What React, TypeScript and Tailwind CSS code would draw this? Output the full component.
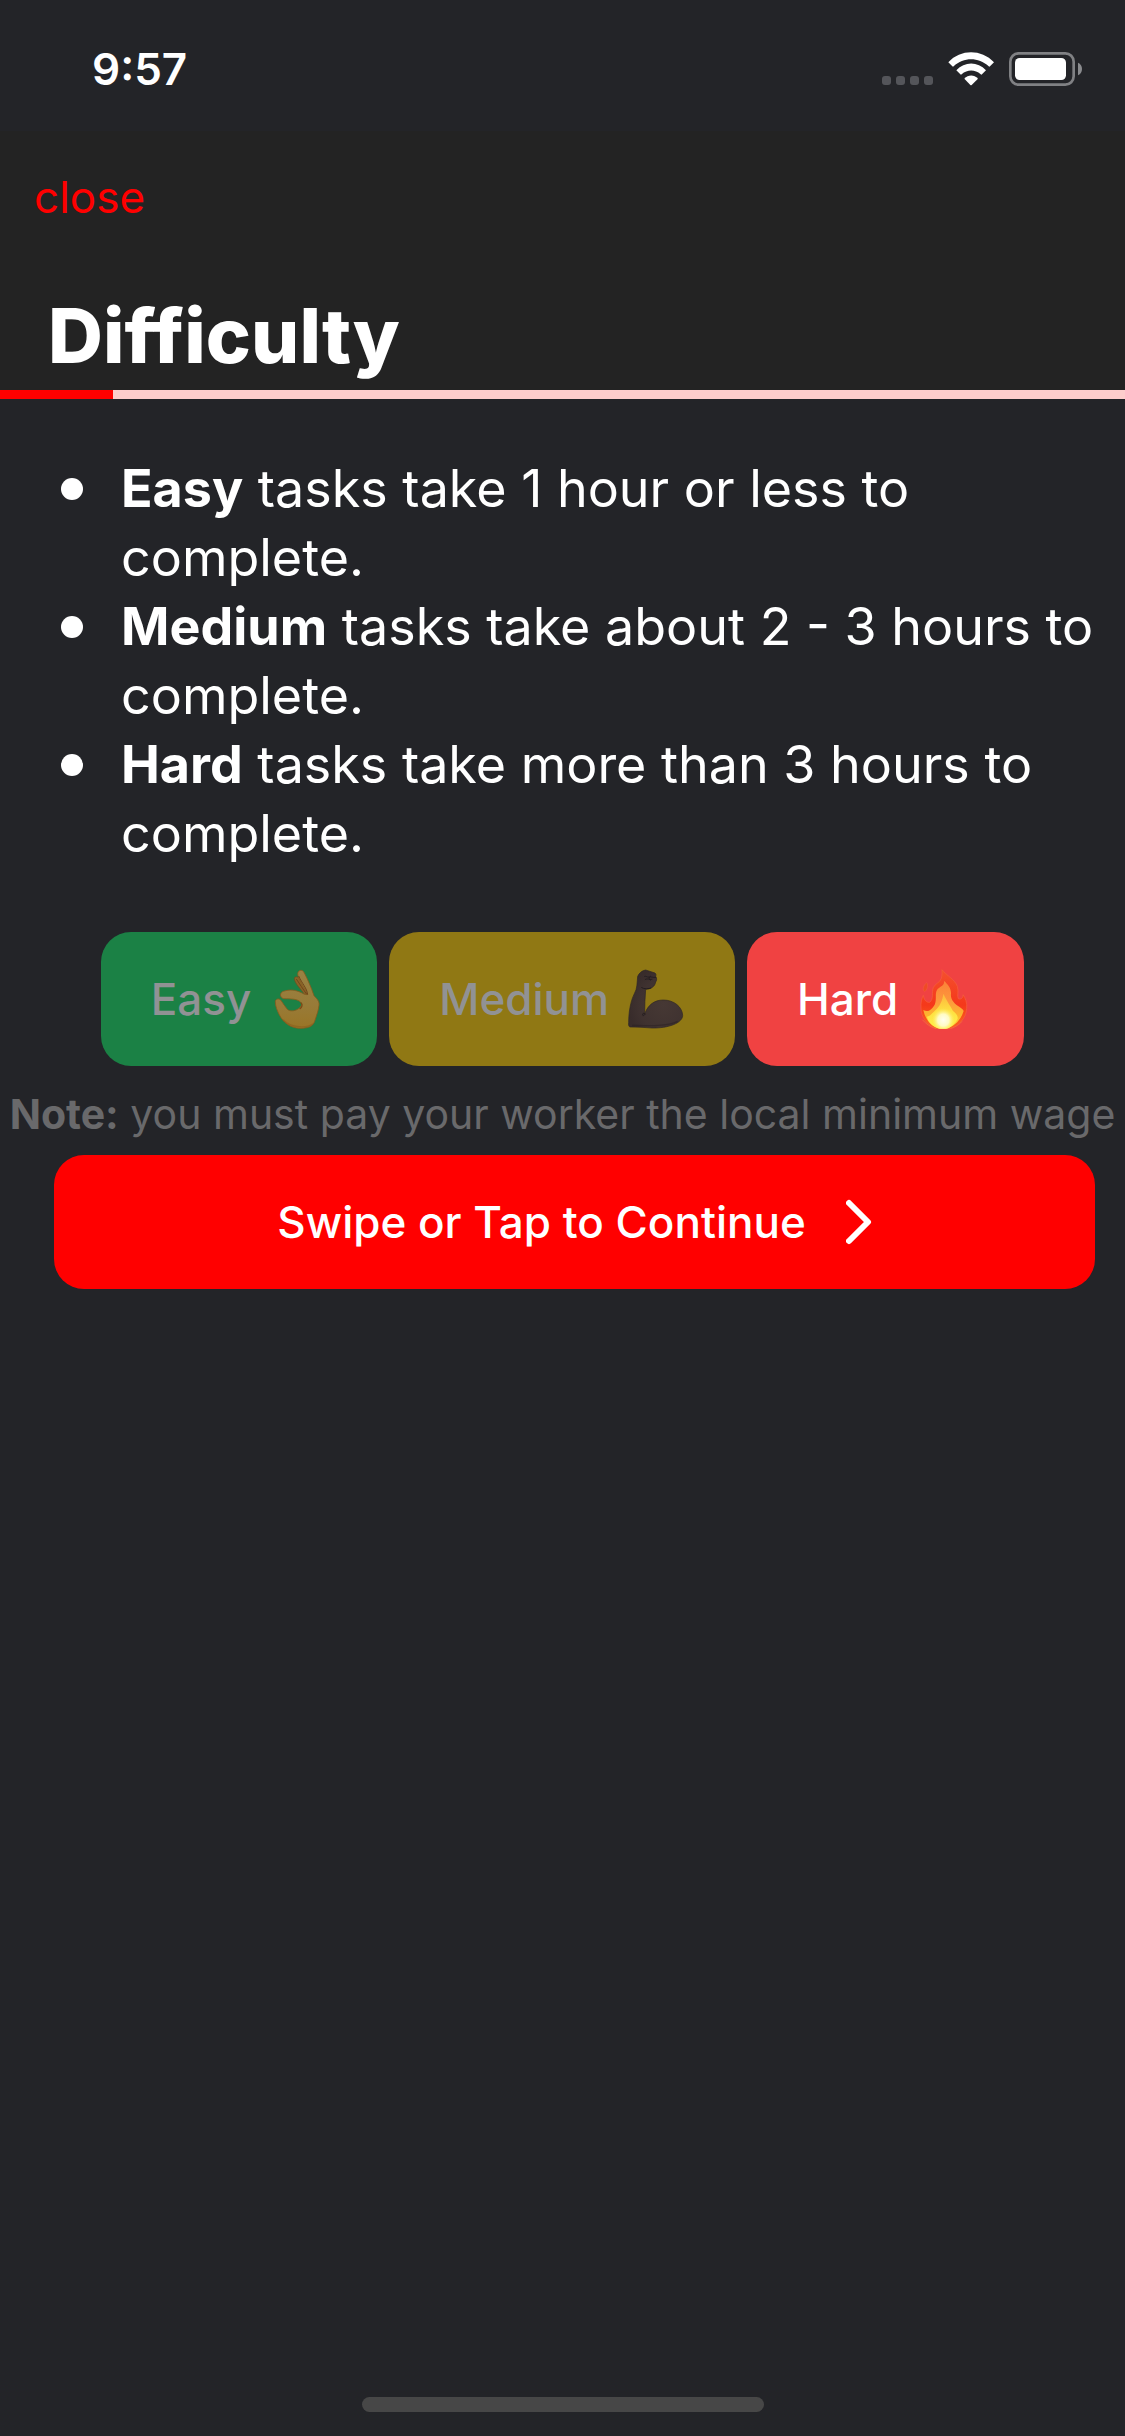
import { useState } from "react";
import type { ReactNode } from "react";

function SignalDots() {
  return (
    <div className="flex gap-[5px] pb-px">
      {[0, 1, 2, 3].map((n) => (
        <span key={n} className="size-[9px] rounded-[3px] bg-[#54555a]" />
      ))}
    </div>
  );
}

function WifiIcon() {
  return (
    <svg viewBox="264 65 138 102" className="h-[34px] w-[46px]" fill="#fff" aria-hidden="true">
      <path d="M265 96C302 56 364 56 402 96L390 108Q388 110 386 108C355 80 311 80 281 108Q279 110 277 108Z" />
      <path d="M289 120C314 93 353 93 378 120L366 132Q364 134 362 132C345 117 322 117 305 132Q303 134 301 132Z" />
      <path d="M313 145C325 132 342 132 354 145L335 164Q333 166 331 164Z" />
    </svg>
  );
}

function BatteryIcon() {
  return (
    <svg viewBox="447 66 219 102" className="h-[34px] w-[73px]" aria-hidden="true">
      <rect x="451" y="70" width="190" height="94" rx="25" fill="none" stroke="#808184" strokeWidth="8" />
      <rect x="465" y="84" width="153" height="66" rx="14" fill="#fff" />
      <path d="M654 98C670 104 670 130 654 136Z" fill="#8a8b8e" />
    </svg>
  );
}

function OkHand() {
  return (
    <svg viewBox="552 180 180 180" className="size-[60px]" aria-hidden="true">
      <defs>
        <linearGradient id="okSkin" x1="0" y1="0" x2="0" y2="1">
          <stop offset="0" stopColor="#9a8142" />
          <stop offset="0.6" stopColor="#987b38" />
          <stop offset="1" stopColor="#9a7526" />
        </linearGradient>
      </defs>
      <path d="M634 207C639 199 648 205 655 216C665 232 672 246 674 262L664 256C656 241 634 224 634 207Z" fill="#8a6428" stroke="#744a1c" strokeWidth="2" />
      <path
        fillRule="evenodd"
        d="M644 194C646 181 660 181 664 192C673 209 685 236 693 260C701 269 710 276 708 289C706 307 700 320 695 337C690 352 676 358 650 358C622 357 601 341 588 316C583 305 577 292 577 278C577 270 587 267 593 273C600 281 605 293 613 301C622 309 640 306 650 296C655 291 657 286 655 282C645 268 622 270 602 269C588 265 591 250 601 247C620 241 636 242 655 251C664 256 670 258 673 256C665 234 645 212 644 194Z"
        fill="url(#okSkin)"
        stroke="#875b1d"
        strokeWidth="2.5"
      />
      <path d="M647 201C657 224 672 237 674 257" fill="none" stroke="#70451b" strokeWidth="3" />
      <path d="M640 210C650 225 660 240 671 256" fill="none" stroke="#70451b" strokeWidth="3" />
      <path d="M654 282C660 287 657 294 651 299" fill="none" stroke="#7b4b18" strokeWidth="4" strokeLinecap="round" />
      <path d="M600 332C625 358 672 358 690 344" fill="none" stroke="#8c5e1e" strokeWidth="4" opacity="0.6" />
    </svg>
  );
}

function FlexedArm() {
  return (
    <svg viewBox="727 180 180 180" className="size-[60px]" aria-hidden="true">
      <defs>
        <radialGradient id="armSkin" cx="0.65" cy="0.6" r="0.65">
          <stop offset="0" stopColor="#463834" />
          <stop offset="0.7" stopColor="#3f3230" />
          <stop offset="1" stopColor="#382c2b" />
        </radialGradient>
      </defs>
      <path
        d="M765 202C769 193 778 184 789 183L817 192C821 195 820 199 819 202C823 207 823 214 819 219C817 232 806 240 789 241C787 265 786 290 786 315C796 287 815 273 842 273C874 273 899 294 900 319C900 342 857 358 808 357C785 355 765 354 742 354C738 353 737 347 738 341C738 310 743 278 755 254C764 240 763 220 765 202Z"
        fill="url(#armSkin)"
        stroke="#2e2526"
        strokeWidth="2"
      />
      <path d="M780 317C783 309 785 311 787 316C785 319 783 320 781 320M777 236C784 241 798 240 805 237" fill="none" stroke="#241d20" strokeWidth="3" strokeLinecap="round" />
      <path d="M786 202C792 200 793 206 799 204C806 202 810 207 819 205M788 211C796 207 798 213 808 211M803 202C798 206 798 210 804 214" fill="none" stroke="#211b1f" strokeWidth="2.5" strokeLinecap="round" />
      <path d="M748 349C790 350 850 354 885 337" fill="none" stroke="#2d2325" strokeWidth="4" opacity="0.6" />
    </svg>
  );
}

function Fire() {
  return (
    <svg viewBox="546 180 180 180" className="size-[60px]" aria-hidden="true">
      <defs>
        <linearGradient id="fireOuter" x1="0" y1="0" x2="0" y2="1">
          <stop offset="0" stopColor="#f4502e" />
          <stop offset="0.6" stopColor="#f5381a" />
          <stop offset="1" stopColor="#fb6a1c" />
        </linearGradient>
        <linearGradient id="fireMid" x1="0" y1="0" x2="0" y2="1">
          <stop offset="0" stopColor="#fb8038" />
          <stop offset="0.45" stopColor="#fd9a3c" />
          <stop offset="0.75" stopColor="#fdb82c" />
          <stop offset="1" stopColor="#fee046" />
        </linearGradient>
        <linearGradient id="fireInner" x1="0" y1="0" x2="0" y2="1">
          <stop offset="0" stopColor="#fdb43c" />
          <stop offset="0.5" stopColor="#fee042" />
          <stop offset="1" stopColor="#fff04a" />
        </linearGradient>
        <radialGradient id="fireCore" cx="0.5" cy="0.6" r="0.5">
          <stop offset="0" stopColor="#fffef0" />
          <stop offset="0.5" stopColor="#fffbc4" />
          <stop offset="1" stopColor="#fff060" stopOpacity="0" />
        </radialGradient>
      </defs>
      <path
        d="M630 182C643 199 669 212 676 232C681 249 674 260 679 269C687 273 694 266 693 257C700 266 706 282 704 298C702 328 681 352 650 359L614 359C586 350 567 325 567 297C566 281 569 268 574 259C576 273 583 281 593 280C606 270 598 252 604 236C609 223 624 222 628 208C631 199 630 191 630 182Z"
        fill="url(#fireOuter)"
        stroke="#f4613d"
        strokeWidth="2"
      />
      <path d="M584 221C590 229 585 244 578 248C570 243 574 229 584 221Z" fill="#ef4a25" stroke="#f36b49" strokeWidth="1" />
      <path
        d="M636 215C647 226 658 237 657 254C655 269 664 279 671 286C681 295 690 296 695 306C686 334 668 351 645 358H620C595 350 579 329 574 303C588 312 600 301 608 287C615 272 608 254 615 243C622 233 639 231 636 215Z"
        fill="url(#fireMid)"
      />
      <path
        d="M634 254C643 274 656 292 663 306C673 314 678 320 677 329C668 347 651 358 640 359H623C603 354 588 339 585 323C596 321 602 311 610 304C622 293 632 275 634 254Z"
        fill="url(#fireInner)"
      />
      <ellipse cx="634" cy="326" rx="34" ry="36" fill="url(#fireCore)" />
      <path d="M571 332C583 346 596 354 612 359M690 337C683 347 670 354 655 359" fill="none" stroke="#f5683b" strokeWidth="3" />
    </svg>
  );
}

const levels: { name: string; tone: string; detail: string; icon: ReactNode }[] = [
  { name: "Easy", tone: "bg-[#1b8145] text-[#919294]", detail: "tasks take 1 hour or less to complete.", icon: <OkHand /> },
  { name: "Medium", tone: "bg-[#907814] text-[#919294]", detail: "tasks take about 2 - 3 hours to complete.", icon: <FlexedArm /> },
  { name: "Hard", tone: "bg-[#f04242] text-white", detail: "tasks take more than 3 hours to complete.", icon: <Fire /> },
];

export default function App() {
  const [selected, setSelected] = useState("Hard");
  return (
    <div className="flex min-h-screen flex-col bg-[#232428] font-['Inter',sans-serif] text-white">
      <div className="flex h-[131px] items-start justify-between pr-[43px] pl-[92px]">
        <time className="mt-[39px] text-[44px] leading-[60px] font-semibold">9:57</time>
        <div className="mt-[52px] flex items-end gap-[15px]">
          <SignalDots />
          <WifiIcon />
          <BatteryIcon />
        </div>
      </div>

      <header className="bg-[#232323] pt-[34px] pb-[7px]">
        <button type="button" className="ml-[34px] block text-[44px] leading-[64px] text-[#ff0000]">
          close
        </button>
        <h1 className="mt-[58px] ml-12 text-[76px] leading-[96px] font-extrabold">Difficulty</h1>
      </header>
      <div role="progressbar" aria-label="Progress" aria-valuenow={10} aria-valuemin={0} aria-valuemax={100} className="h-[9px] bg-[#fdcdcc]">
        <div className="h-full w-1/10 bg-[#ff0000]" />
      </div>

      <main className="flex flex-col pt-[55px]">
        <ul className="pr-5 pl-[61px] text-[52px] leading-[69px]">
          {levels.map((level) => (
            <li key={level.name} className="flex gap-[38px]">
              <span className="mt-6 size-[22px] shrink-0 rounded-full bg-white" />
              <span>
                <strong className="font-bold">{level.name}</strong> {level.detail}
              </span>
            </li>
          ))}
        </ul>

        <div className="mt-16 flex justify-center gap-3">
          {levels.map((level) => (
            <button
              key={level.name}
              type="button"
              aria-pressed={selected === level.name}
              onClick={() => setSelected(level.name)}
              className={`flex h-[134px] items-center gap-4 rounded-[30px] px-[50px] text-[44px] font-medium ${level.tone}`}
            >
              {level.name}
              {level.icon}
            </button>
          ))}
        </div>

        <p className="mt-6 text-center text-[41px] leading-[48px] whitespace-nowrap text-[#69696b]">
          <strong className="font-bold">Note:</strong> you must pay your worker the local minimum wage
        </p>

        <button
          type="button"
          className="mt-[17px] mr-[30px] ml-[54px] flex h-[134px] items-center justify-center gap-10 rounded-[30px] bg-[#ff0000] text-[44px] font-medium"
        >
          Swipe or Tap to Continue
          <svg viewBox="0 0 26 46" className="h-[46px] w-[26px]" fill="none" stroke="#fff" strokeWidth="6" strokeLinecap="round" strokeLinejoin="round" aria-hidden="true">
            <path d="M3 4L22 23L3 42" />
          </svg>
        </button>
      </main>

      <div className="mx-auto mt-auto mb-6 h-[15px] w-[402px] rounded-full bg-[#474747]" />
    </div>
  );
}
